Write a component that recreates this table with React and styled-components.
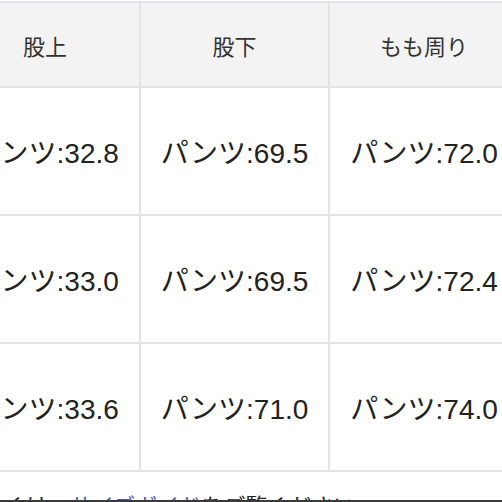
import React from "react";
import styled, { createGlobalStyle } from "styled-components";

const Global = createGlobalStyle`
  html, body { margin: 0; padding: 0; background: #ffffff; }
  * { box-sizing: border-box; }
`;

const Page = styled.div`
  width: 502px;
  height: 502px;
  overflow: hidden;
  background: #ffffff;
  border-bottom: 2px solid #3a3a3a;
  padding-top: 1px;
  font-family: "Liberation Sans", "Noto Sans CJK JP", sans-serif;
`;

const Grid = styled.div`
  display: grid;
  grid-template-columns: 188px 187px 188px;
  grid-template-rows: 83px repeat(3, 126px);
  gap: 2px;
  padding: 2px;
  background: #e2e3e6;
  width: max-content;
  margin-left: -51px;
`;

const Cell = styled.div`
  display: flex;
  align-items: center;
  justify-content: center;
  white-space: nowrap;
  background: ${(p) => (p.$head ? "#f3f3f4" : "#ffffff")};
  color: ${(p) => (p.$head ? "#333333" : "#222222")};
  font-size: ${(p) => (p.$head ? "22px" : "28px")};
`;

const Note = styled.p`
  margin: 19px 0 0 -40px;
  font-size: 22px;
  line-height: 32px;
  color: #222;
  white-space: nowrap;
`;

const Link = styled.span`
  color: #4a5bb5;
`;

const heads = ["股上", "股下", "もも周り"];
const rows = [
  ["32.8", "69.5", "72.0"],
  ["33.0", "69.5", "72.4"],
  ["33.6", "71.0", "74.0"],
];

export default function App() {
  return (
    <Page>
      <Global />
      <Grid>
        {heads.map((h) => (
          <Cell key={h} $head>
            {h}
          </Cell>
        ))}
        {rows.map((r, i) =>
          r.map((v, j) => <Cell key={i + "-" + j}>パンツ:{v}</Cell>)
        )}
      </Grid>
      <Note>
        詳しくは、<Link>サイズガイド</Link>をご覧ください
      </Note>
    </Page>
  );
}
